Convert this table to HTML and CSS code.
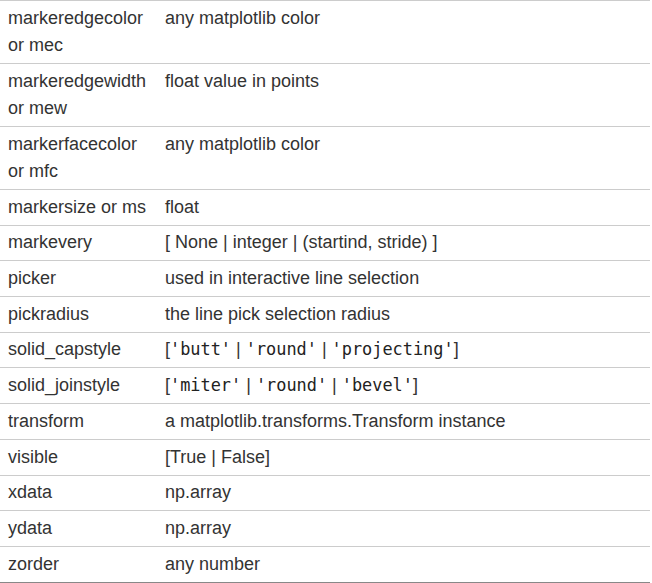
FILE: index.html
```html
<!DOCTYPE html>
<html lang="en">
<head>
    <meta charset="UTF-8">
    <title>Line2D properties</title>
    <link rel="stylesheet" href="styles.css">
</head>
<body>

    <table class="props">
        <tbody>
            <tr><td class="name">markeredgecolor or mec</td><td>any matplotlib color</td></tr>
            <tr><td class="name">markeredgewidth or mew</td><td>float value in points</td></tr>
            <tr><td class="name">markerfacecolor or mfc</td><td>any matplotlib color</td></tr>
            <tr><td class="name">markersize or ms</td><td>float</td></tr>
            <tr><td class="name">markevery</td><td>[ None | integer | (startind, stride) ]</td></tr>
            <tr><td class="name">picker</td><td>used in interactive line selection</td></tr>
            <tr><td class="name">pickradius</td><td>the line pick selection radius</td></tr>
            <tr><td class="name">solid_capstyle</td><td>[<code>'butt'</code> | <code>'round'</code> | <code>'projecting'</code>]</td></tr>
            <tr><td class="name">solid_joinstyle</td><td>[<code>'miter'</code> | <code>'round'</code> | <code>'bevel'</code>]</td></tr>
            <tr><td class="name">transform</td><td>a matplotlib.transforms.Transform instance</td></tr>
            <tr><td class="name">visible</td><td>[True | False]</td></tr>
            <tr><td class="name">xdata</td><td>np.array</td></tr>
            <tr><td class="name">ydata</td><td>np.array</td></tr>
            <tr><td class="name">zorder</td><td>any number</td></tr>
        </tbody>
    </table>

</body>
</html>
```

FILE: styles.css
```css
body {
    margin: 0;
    background: #fff;
    font-family: "Liberation Sans", Arial, sans-serif;
    font-size: 18px;
    color: #333;
}

.props {
    width: 650px;
    border-collapse: collapse;
    border-top: 1px solid #ccc;
}

.props td {
    padding: 3.73px 8px;
    line-height: 27.27px;
    border-bottom: 1px solid #ccc;
    vertical-align: top;
    text-align: left;
}

.props tr:last-child td {
    border-bottom: 1px solid #888;
}

.props td.name {
    width: 141px;
}

code {
    font-family: "DejaVu Sans Mono", monospace;
    font-size: 16.9px;
    color: #222;
}
```
